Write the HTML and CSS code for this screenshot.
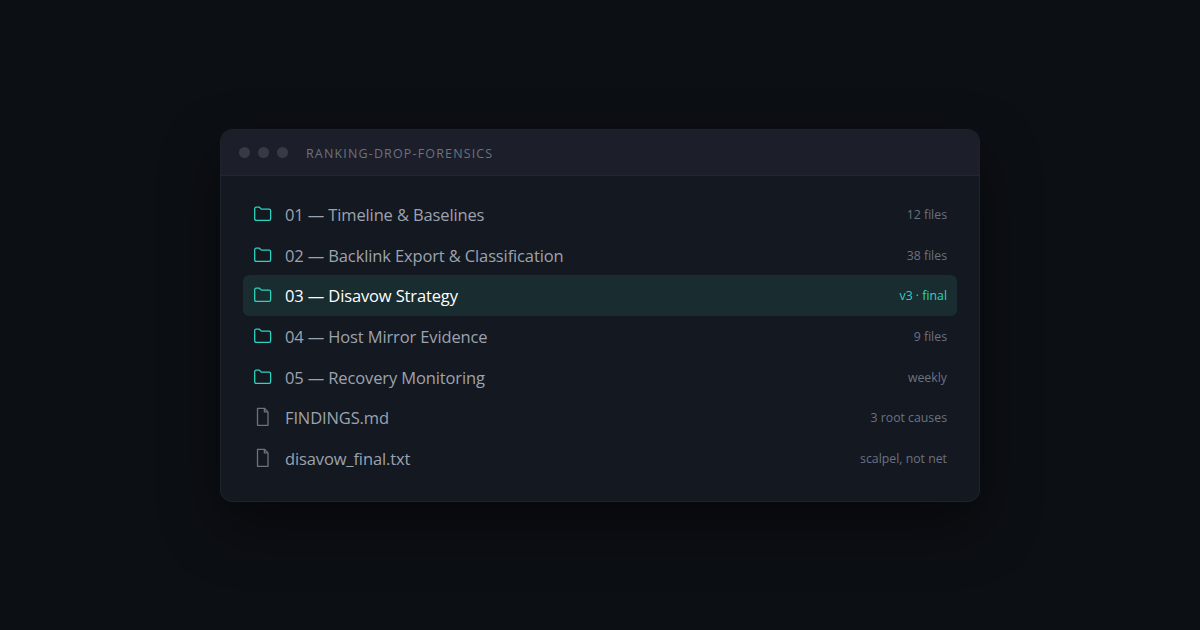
FILE: index.html
```html
<!DOCTYPE html>
<html lang="en">

<head>
    <meta charset="UTF-8">
    <meta name="viewport" content="width=device-width, initial-scale=1.0">
    <title>Ranking Drop Forensics</title>
    <link rel="stylesheet" href="styles.css">
</head>

<body>
    <!-- shared icons -->
    <svg class="sprite">
        <symbol id="folder" viewBox="0 0 20 20">
            <path d="M1.7 15V4.6a1.4 1.4 0 0 1 1.4-1.4h3.3l1.9 1.9h7.9a1.4 1.4 0 0 1 1.4 1.4V15a1.4 1.4 0 0 1-1.4 1.4H3.1A1.4 1.4 0 0 1 1.7 15z" />
        </symbol>
        <symbol id="file" viewBox="0 0 20 20">
            <path d="M4.5 1.3h6.9L15 4.9v13.4H4.5z" />
            <path d="M11.4 1.3v3.6H15" />
        </symbol>
    </svg>

    <div class="window">
        <div class="titlebar">
            <span class="dot"></span>
            <span class="dot"></span>
            <span class="dot"></span>
            <span class="title">RANKING-DROP-FORENSICS</span>
        </div>
        <div class="list">
            <div class="row">
                <svg class="icon"><use href="#folder" /></svg>
                <span class="name">01 — Timeline &amp; Baselines</span>
                <span class="meta">12 files</span>
            </div>
            <div class="row">
                <svg class="icon"><use href="#folder" /></svg>
                <span class="name">02 — Backlink Export &amp; Classification</span>
                <span class="meta">38 files</span>
            </div>
            <div class="row active">
                <svg class="icon"><use href="#folder" /></svg>
                <span class="name">03 — Disavow Strategy</span>
                <span class="meta">v3 · final</span>
            </div>
            <div class="row">
                <svg class="icon"><use href="#folder" /></svg>
                <span class="name">04 — Host Mirror Evidence</span>
                <span class="meta">9 files</span>
            </div>
            <div class="row">
                <svg class="icon"><use href="#folder" /></svg>
                <span class="name">05 — Recovery Monitoring</span>
                <span class="meta">weekly</span>
            </div>
            <div class="row">
                <svg class="icon file"><use href="#file" /></svg>
                <span class="name">FINDINGS.md</span>
                <span class="meta">3 root causes</span>
            </div>
            <div class="row">
                <svg class="icon file"><use href="#file" /></svg>
                <span class="name">disavow_final.txt</span>
                <span class="meta">scalpel, not net</span>
            </div>
        </div>
    </div>
</body>

</html>
```
FILE: styles.css
```css
* {
    margin: 0;
    padding: 0;
    box-sizing: border-box;
}

body {
    font-family: "Segoe UI", "Open Sans", "Noto Sans", sans-serif;
    background-color: #0c0f14;
    display: flex;
    justify-content: center;
    align-items: center;
    height: 100vh;
    overflow: hidden;
    color: #9ca3af;
}

.sprite {
    display: none;
}

/* Window */
.window {
    width: 760px;
    background-color: #141820;
    border: 1px solid #1f242c;
    border-radius: 12px;
    box-shadow: 0 24px 60px rgba(0, 0, 0, 0.45);
    overflow: hidden;
}

.titlebar {
    display: flex;
    align-items: center;
    height: 46px;
    padding: 0 18px;
    gap: 8px;
    background-color: #1c1f2a;
    border-bottom: 1px solid #20252e;
}

.dot {
    width: 11px;
    height: 11px;
    border-radius: 50%;
    background-color: #373a44;
}

.title {
    margin-left: 10px;
    padding-top: 2px;
    font-size: 12.5px;
    letter-spacing: 1.15px;
    color: #6b7280;
}

/* File list */
.list {
    padding: 18.3px 22px 22px;
}

.row {
    display: flex;
    align-items: center;
    height: 40.68px;
    padding: 0 10px;
    gap: 12px;
    border-radius: 6px;
}

.icon {
    width: 20px;
    height: 20px;
    fill: none;
    stroke: #2dd4bf;
    stroke-width: 1.3;
    stroke-linejoin: round;
}

.icon.file {
    stroke: #6b7280;
}

.name {
    flex: 1;
    padding-top: 1px;
    font-size: 16.5px;
    letter-spacing: -0.13px;
}

.meta {
    padding-top: 1px;
    font-size: 12.3px;
    color: #6b7280;
}

.active {
    background-color: #192c30;
}

.active .name {
    color: #fff;
}

.active .meta {
    color: #2dd4bf;
}
```
